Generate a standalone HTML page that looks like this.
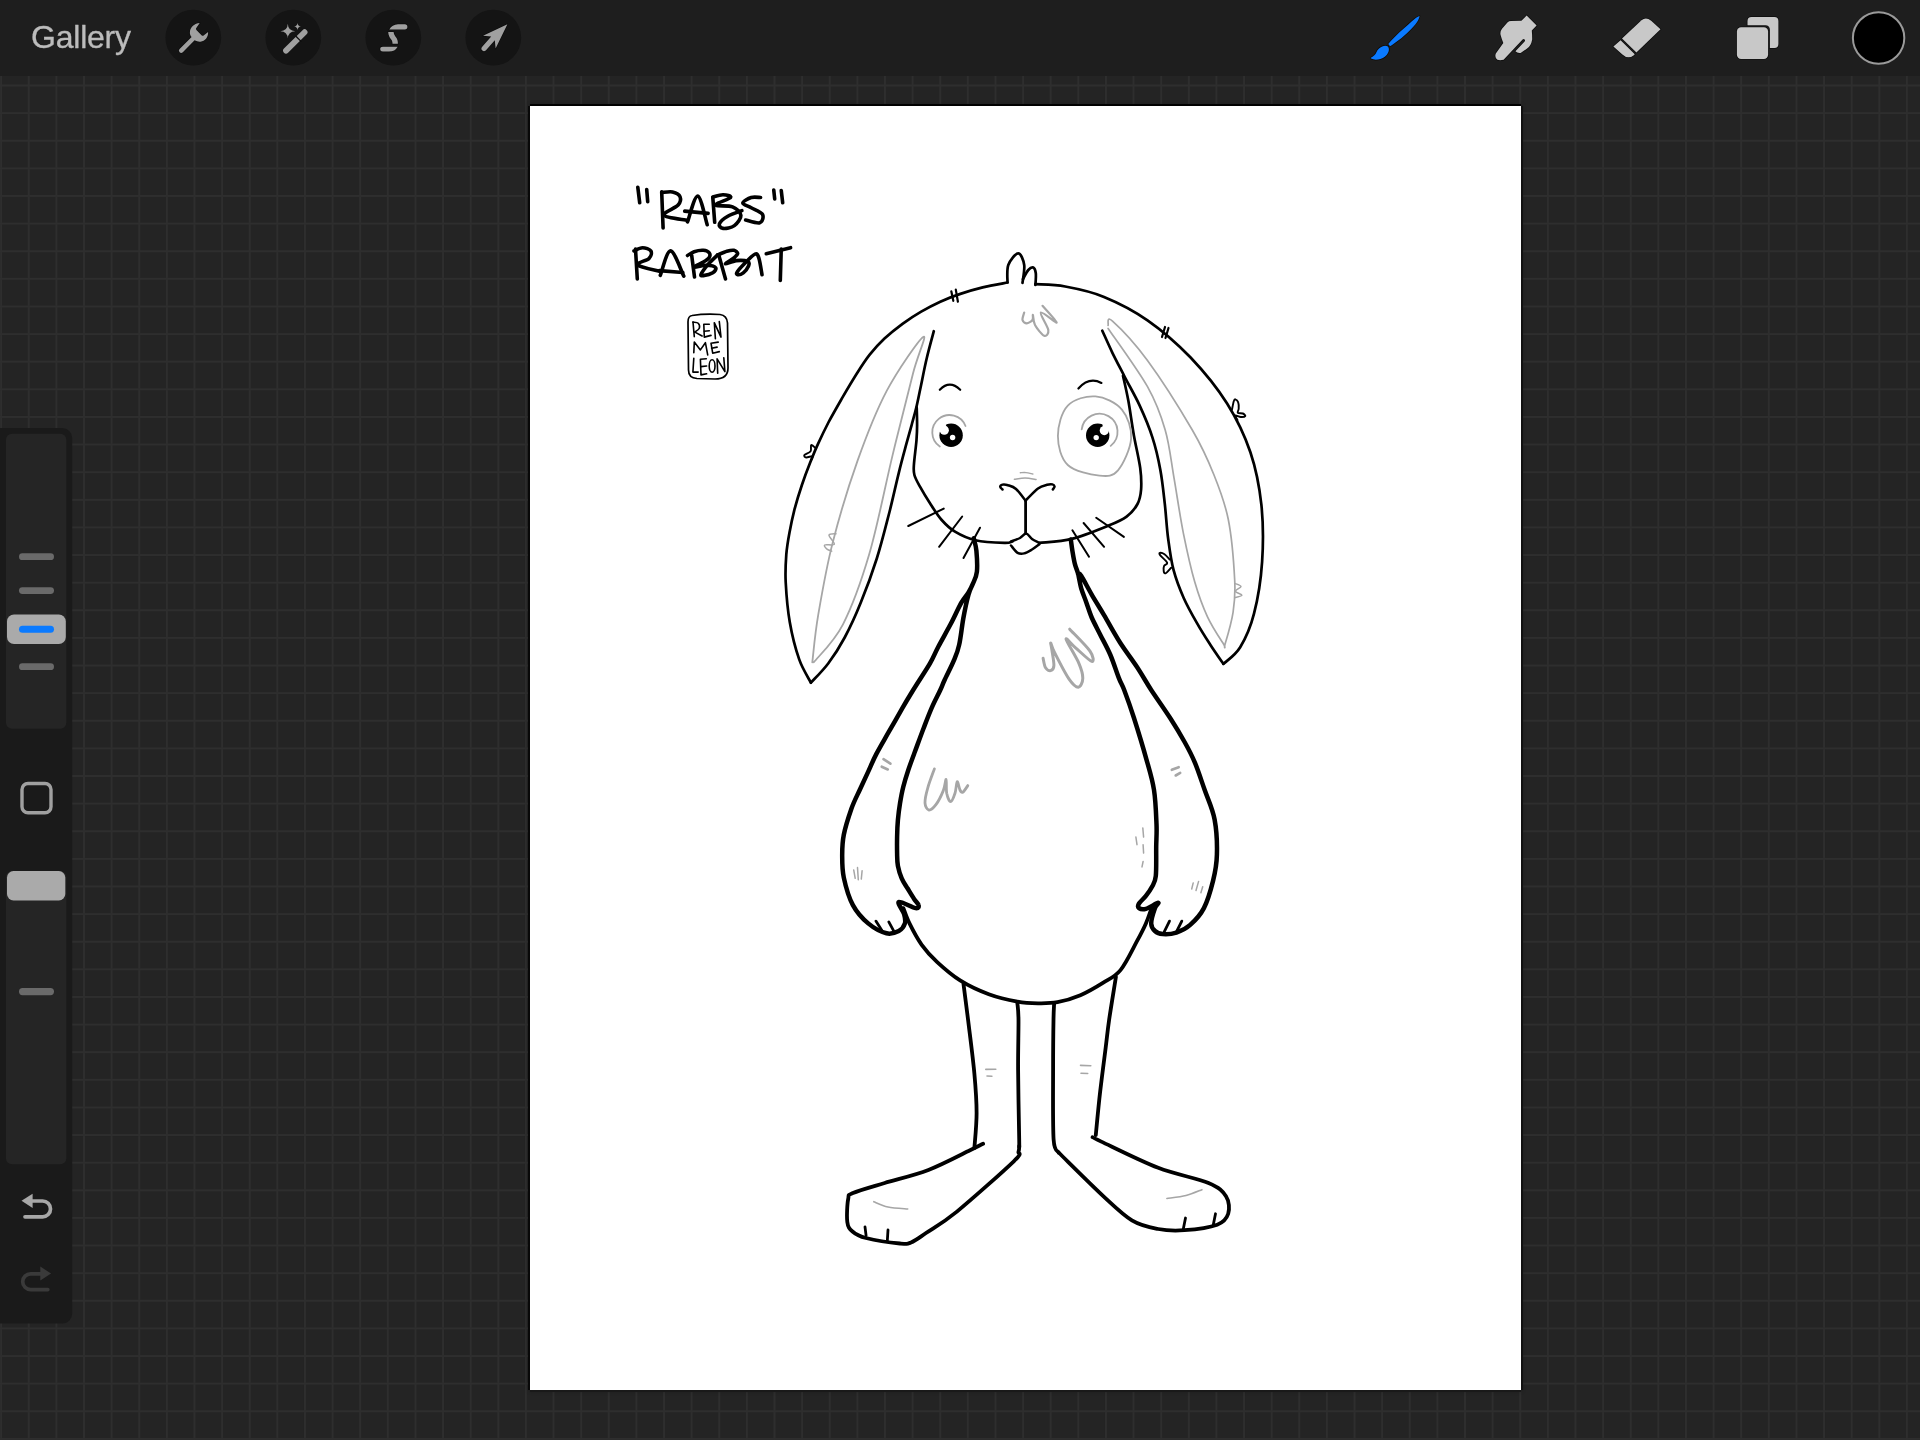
<!DOCTYPE html>
<html><head><meta charset="utf-8">
<style>
html,body{margin:0;padding:0;width:1920px;height:1440px;overflow:hidden;background:#242424;}
body{position:relative;font-family:"Liberation Sans",sans-serif;}
.abs{position:absolute;}
#grid{position:absolute;left:0;top:0;}
#topbar{position:absolute;left:0;top:0;width:1920px;height:76px;background:#1e1e1e;}
#gallery{position:absolute;left:31.2px;top:16.6px;font-size:32px;letter-spacing:-0.22px;color:#bcbcbc;-webkit-text-stroke:0.35px #bcbcbc;will-change:transform;line-height:40px;}
#canvas{position:absolute;left:530px;top:106px;width:991px;height:1284px;background:#fff;box-shadow:0 -2px 0 #000, -2px 0 0 #080808, 2px 0 0 #111, 0 2px 0 #191919, 0 0 4px 1px rgba(0,0,0,0.3);}
#draw{position:absolute;left:0;top:0;}
</style></head><body>
<svg id="grid" width="1920" height="1440" fill="#2e2e2e"><rect x="0.14" y="76" width="2" height="1364"/>
<rect x="27.76" y="76" width="2" height="1364"/>
<rect x="55.38" y="76" width="2" height="1364"/>
<rect x="83.00" y="76" width="2" height="1364"/>
<rect x="110.62" y="76" width="2" height="1364"/>
<rect x="138.24" y="76" width="2" height="1364"/>
<rect x="165.86" y="76" width="2" height="1364"/>
<rect x="193.48" y="76" width="2" height="1364"/>
<rect x="221.10" y="76" width="2" height="1364"/>
<rect x="248.72" y="76" width="2" height="1364"/>
<rect x="276.34" y="76" width="2" height="1364"/>
<rect x="303.96" y="76" width="2" height="1364"/>
<rect x="331.58" y="76" width="2" height="1364"/>
<rect x="359.20" y="76" width="2" height="1364"/>
<rect x="386.82" y="76" width="2" height="1364"/>
<rect x="414.44" y="76" width="2" height="1364"/>
<rect x="442.06" y="76" width="2" height="1364"/>
<rect x="469.68" y="76" width="2" height="1364"/>
<rect x="497.30" y="76" width="2" height="1364"/>
<rect x="524.92" y="76" width="2" height="1364"/>
<rect x="552.54" y="76" width="2" height="1364"/>
<rect x="580.16" y="76" width="2" height="1364"/>
<rect x="607.78" y="76" width="2" height="1364"/>
<rect x="635.40" y="76" width="2" height="1364"/>
<rect x="663.02" y="76" width="2" height="1364"/>
<rect x="690.64" y="76" width="2" height="1364"/>
<rect x="718.26" y="76" width="2" height="1364"/>
<rect x="745.88" y="76" width="2" height="1364"/>
<rect x="773.50" y="76" width="2" height="1364"/>
<rect x="801.12" y="76" width="2" height="1364"/>
<rect x="828.74" y="76" width="2" height="1364"/>
<rect x="856.36" y="76" width="2" height="1364"/>
<rect x="883.98" y="76" width="2" height="1364"/>
<rect x="911.60" y="76" width="2" height="1364"/>
<rect x="939.22" y="76" width="2" height="1364"/>
<rect x="966.84" y="76" width="2" height="1364"/>
<rect x="994.46" y="76" width="2" height="1364"/>
<rect x="1022.08" y="76" width="2" height="1364"/>
<rect x="1049.70" y="76" width="2" height="1364"/>
<rect x="1077.32" y="76" width="2" height="1364"/>
<rect x="1104.94" y="76" width="2" height="1364"/>
<rect x="1132.56" y="76" width="2" height="1364"/>
<rect x="1160.18" y="76" width="2" height="1364"/>
<rect x="1187.80" y="76" width="2" height="1364"/>
<rect x="1215.42" y="76" width="2" height="1364"/>
<rect x="1243.04" y="76" width="2" height="1364"/>
<rect x="1270.66" y="76" width="2" height="1364"/>
<rect x="1298.28" y="76" width="2" height="1364"/>
<rect x="1325.90" y="76" width="2" height="1364"/>
<rect x="1353.52" y="76" width="2" height="1364"/>
<rect x="1381.14" y="76" width="2" height="1364"/>
<rect x="1408.76" y="76" width="2" height="1364"/>
<rect x="1436.38" y="76" width="2" height="1364"/>
<rect x="1464.00" y="76" width="2" height="1364"/>
<rect x="1491.62" y="76" width="2" height="1364"/>
<rect x="1519.24" y="76" width="2" height="1364"/>
<rect x="1546.86" y="76" width="2" height="1364"/>
<rect x="1574.48" y="76" width="2" height="1364"/>
<rect x="1602.10" y="76" width="2" height="1364"/>
<rect x="1629.72" y="76" width="2" height="1364"/>
<rect x="1657.34" y="76" width="2" height="1364"/>
<rect x="1684.96" y="76" width="2" height="1364"/>
<rect x="1712.58" y="76" width="2" height="1364"/>
<rect x="1740.20" y="76" width="2" height="1364"/>
<rect x="1767.82" y="76" width="2" height="1364"/>
<rect x="1795.44" y="76" width="2" height="1364"/>
<rect x="1823.06" y="76" width="2" height="1364"/>
<rect x="1850.68" y="76" width="2" height="1364"/>
<rect x="1878.30" y="76" width="2" height="1364"/>
<rect x="1905.92" y="76" width="2" height="1364"/>
<rect x="0" y="84.50" width="1920" height="2"/>
<rect x="0" y="112.12" width="1920" height="2"/>
<rect x="0" y="139.74" width="1920" height="2"/>
<rect x="0" y="167.36" width="1920" height="2"/>
<rect x="0" y="194.98" width="1920" height="2"/>
<rect x="0" y="222.60" width="1920" height="2"/>
<rect x="0" y="250.22" width="1920" height="2"/>
<rect x="0" y="277.84" width="1920" height="2"/>
<rect x="0" y="305.46" width="1920" height="2"/>
<rect x="0" y="333.08" width="1920" height="2"/>
<rect x="0" y="360.70" width="1920" height="2"/>
<rect x="0" y="388.32" width="1920" height="2"/>
<rect x="0" y="415.94" width="1920" height="2"/>
<rect x="0" y="443.56" width="1920" height="2"/>
<rect x="0" y="471.18" width="1920" height="2"/>
<rect x="0" y="498.80" width="1920" height="2"/>
<rect x="0" y="526.42" width="1920" height="2"/>
<rect x="0" y="554.04" width="1920" height="2"/>
<rect x="0" y="581.66" width="1920" height="2"/>
<rect x="0" y="609.28" width="1920" height="2"/>
<rect x="0" y="636.90" width="1920" height="2"/>
<rect x="0" y="664.52" width="1920" height="2"/>
<rect x="0" y="692.14" width="1920" height="2"/>
<rect x="0" y="719.76" width="1920" height="2"/>
<rect x="0" y="747.38" width="1920" height="2"/>
<rect x="0" y="775.00" width="1920" height="2"/>
<rect x="0" y="802.62" width="1920" height="2"/>
<rect x="0" y="830.24" width="1920" height="2"/>
<rect x="0" y="857.86" width="1920" height="2"/>
<rect x="0" y="885.48" width="1920" height="2"/>
<rect x="0" y="913.10" width="1920" height="2"/>
<rect x="0" y="940.72" width="1920" height="2"/>
<rect x="0" y="968.34" width="1920" height="2"/>
<rect x="0" y="995.96" width="1920" height="2"/>
<rect x="0" y="1023.58" width="1920" height="2"/>
<rect x="0" y="1051.20" width="1920" height="2"/>
<rect x="0" y="1078.82" width="1920" height="2"/>
<rect x="0" y="1106.44" width="1920" height="2"/>
<rect x="0" y="1134.06" width="1920" height="2"/>
<rect x="0" y="1161.68" width="1920" height="2"/>
<rect x="0" y="1189.30" width="1920" height="2"/>
<rect x="0" y="1216.92" width="1920" height="2"/>
<rect x="0" y="1244.54" width="1920" height="2"/>
<rect x="0" y="1272.16" width="1920" height="2"/>
<rect x="0" y="1299.78" width="1920" height="2"/>
<rect x="0" y="1327.40" width="1920" height="2"/>
<rect x="0" y="1355.02" width="1920" height="2"/>
<rect x="0" y="1382.64" width="1920" height="2"/>
<rect x="0" y="1410.26" width="1920" height="2"/>
<rect x="0" y="1437.88" width="1920" height="2"/></svg>
<div id="canvas"></div>
<svg id="draw" width="1920" height="1440" viewBox="0 0 1920 1440" fill="none" stroke="#000" stroke-linecap="round" stroke-linejoin="round">
<path d="M810.9,682.7C809.0,678.8 802.7,669.4 799.2,659.4C795.7,649.3 792.0,635.0 789.8,622.2C787.5,609.4 786.3,593.6 785.7,582.3C785.1,571.0 785.7,562.7 786.3,554.4C787.0,546.1 788.1,540.0 789.5,532.5C790.9,525.0 792.5,517.3 794.5,509.4C796.6,501.5 799.3,492.7 801.9,485.0C804.5,477.3 807.3,469.9 810.0,463.1C812.7,456.4 814.7,451.1 817.8,444.4C820.9,437.6 824.3,430.4 828.4,422.5C832.6,414.6 838.1,405.1 842.8,396.9C847.6,388.7 852.6,380.3 857.0,373.3C861.5,366.2 865.1,360.5 869.7,354.7C874.3,348.9 879.1,343.7 884.5,338.6C890.0,333.5 896.4,328.4 902.5,323.9C908.6,319.4 914.9,315.2 921.2,311.6C927.6,307.9 933.8,304.7 940.3,301.7C946.8,298.8 953.4,296.2 960.4,293.9C967.5,291.5 974.9,289.3 982.7,287.4C990.6,285.5 1003.4,283.3 1007.5,282.5" stroke="#000" stroke-width="2.7" fill="none"/>
<path d="M1007.5,282.5C1007.6,279.6 1006.5,269.9 1008.3,265.0C1010.1,260.1 1015.6,253.3 1018.3,253.3C1020.9,253.3 1023.5,260.1 1024.2,265.0C1024.9,269.9 1022.8,279.9 1022.5,282.9" stroke="#000" stroke-width="2.7" fill="none"/>
<path d="M1022.9,279.2C1023.8,277.7 1026.6,271.9 1028.3,270.0C1030.0,268.1 1032.0,266.9 1033.3,267.5C1034.5,268.1 1035.4,270.4 1035.8,273.3C1036.2,276.2 1035.5,283.1 1035.4,285.0" stroke="#000" stroke-width="2.7" fill="none"/>
<path d="M1035.4,284.2C1040.4,284.6 1053.8,284.4 1065.2,286.5C1076.6,288.6 1090.3,291.2 1104.0,296.9C1117.7,302.5 1133.1,310.2 1147.5,320.3C1162.0,330.4 1177.3,343.7 1190.6,357.5C1203.8,371.4 1217.1,387.7 1227.1,403.5C1237.0,419.3 1244.7,435.4 1250.4,452.3C1256.1,469.2 1259.4,486.6 1261.4,504.9C1263.3,523.1 1263.3,543.7 1262.1,561.8C1260.9,579.9 1257.7,599.4 1254.0,613.6C1250.4,627.9 1245.3,638.8 1240.2,647.2C1235.1,655.6 1226.2,661.1 1223.4,663.9" stroke="#000" stroke-width="2.7" fill="none"/>
<path d="M951.3,291.3L953.3,300.8" stroke="#000" stroke-width="2.2"/>
<path d="M955.8,289.6L957.9,301.7" stroke="#000" stroke-width="2.2"/>
<path d="M1162,337L1165,327" stroke="#000" stroke-width="2.2"/>
<path d="M1165.5,338L1168.5,328" stroke="#000" stroke-width="2.2"/>
<path d="M810.9,682.7C813.8,679.5 822.6,671.0 828.2,663.5C833.9,655.9 839.3,647.6 844.7,637.5C850.1,627.4 855.4,616.0 860.7,602.8C866.1,589.6 872.0,573.7 876.8,558.5C881.6,543.3 885.9,525.8 889.6,511.5C893.2,497.2 896.0,484.0 898.8,472.8C901.5,461.6 904.1,452.3 906.3,444.2C908.5,436.1 910.2,430.1 911.9,424.0C913.6,417.9 914.8,413.8 916.3,407.5C917.8,401.2 919.1,394.3 920.9,386.0C922.6,377.8 924.6,367.1 926.8,358.0C928.9,348.9 932.6,335.7 933.8,331.2" stroke="#000" stroke-width="2.7" fill="none"/>
<path d="M916.7,407.5C916.8,410.4 917.1,419.6 917.1,425.0C917.1,430.4 917.0,433.3 916.5,440.0C916.0,446.7 914.2,459.2 913.9,465.0C913.5,470.8 913.4,471.4 914.4,475.0C915.4,478.6 917.4,482.0 920.0,486.7C922.6,491.4 926.4,497.8 930.0,503.3C933.6,508.9 937.5,515.3 941.7,520.0C945.9,524.7 949.4,528.3 955.0,531.7C960.6,535.1 967.1,538.3 975.4,540.2C983.6,542.1 998.3,542.7 1004.5,542.9C1010.7,543.1 1011.1,541.7 1012.4,541.5" stroke="#000" stroke-width="2.7" fill="none"/>
<path d="M1223.4,663.9C1221.2,660.7 1214.7,651.5 1210.3,644.7C1205.9,637.9 1201.4,631.0 1197.0,623.1C1192.5,615.3 1187.5,606.6 1183.6,597.7C1179.7,588.9 1176.2,580.0 1173.6,570.2C1171.0,560.4 1169.7,550.1 1168.2,539.0C1166.7,528.0 1166.1,515.4 1164.8,503.9C1163.5,492.4 1162.4,480.9 1160.3,469.8C1158.3,458.7 1155.9,448.0 1152.4,437.3C1149.0,426.6 1144.3,415.6 1139.7,405.6C1135.1,395.6 1129.4,386.0 1124.8,377.1C1120.3,368.3 1116.2,360.5 1112.4,352.8C1108.7,345.0 1104.0,334.4 1102.3,330.7" stroke="#000" stroke-width="2.7" fill="none"/>
<path d="M1123.0,375.8C1123.9,380.0 1126.6,391.2 1128.4,401.1C1130.2,411.0 1131.9,424.3 1133.9,435.4C1135.9,446.5 1139.0,458.9 1140.2,467.9C1141.4,476.9 1141.5,483.5 1141.1,489.5C1140.6,495.5 1139.9,499.5 1137.5,504.0C1135.1,508.5 1131.4,513.0 1126.6,516.6C1121.8,520.2 1117.7,521.9 1108.6,525.6C1099.5,529.3 1083.3,536.0 1071.8,538.9C1060.3,541.8 1044.8,542.2 1039.4,542.9" stroke="#000" stroke-width="2.7" fill="none"/>
<path d="M816.2,448.8C815.4,448.1 812.2,444.6 811.2,445.0C810.3,445.4 811.7,449.6 810.6,451.2C809.5,452.9 805.1,454.0 804.4,455.0C803.7,456.0 804.9,457.3 806.2,457.5C807.6,457.7 811.7,455.8 812.5,456.2C813.3,456.7 811.5,459.4 811.2,460.0" stroke="#000" stroke-width="1.9" fill="none"/>
<path d="M1232.0,409.5C1232.3,408.1 1233.2,403.1 1233.7,401.4C1234.2,399.7 1234.5,399.1 1235.3,399.3C1236.1,399.5 1237.7,400.8 1238.2,402.4C1238.8,404.0 1238.8,407.0 1238.7,408.7C1238.6,410.4 1237.1,412.0 1237.8,412.8C1238.5,413.6 1241.5,413.0 1242.8,413.5C1244.0,414.0 1245.6,415.4 1245.3,416.0C1245.0,416.6 1242.4,417.1 1240.8,417.0C1239.1,416.9 1235.8,415.0 1235.3,415.5C1234.8,416.0 1237.1,419.2 1237.5,420.0" stroke="#000" stroke-width="1.9" fill="none"/>
<path d="M1169.7,559.5C1168.8,558.6 1166.1,555.4 1164.5,554.3C1162.9,553.2 1160.6,552.7 1159.9,552.9C1159.2,553.1 1159.1,553.8 1160.3,555.4C1161.5,557.0 1166.6,561.0 1167.2,562.7C1167.8,564.4 1164.7,564.4 1164.1,565.8C1163.5,567.2 1163.5,569.8 1163.7,571.0C1163.9,572.2 1164.2,573.8 1165.5,573.3C1166.8,572.8 1170.2,568.6 1171.2,567.7" stroke="#000" stroke-width="1.9" fill="none"/>
<path d="M812.3,662.3C813.3,654.5 814.7,635.5 818.1,615.6C821.5,595.7 826.1,568.4 832.7,542.6C839.3,516.8 848.5,486.2 857.5,460.9C866.5,435.6 875.8,411.6 886.7,390.9C897.7,370.2 918.8,339.8 923.2,336.9C927.6,334.0 918.1,353.7 913.0,373.4C907.9,393.1 899.9,425.0 892.6,455.1C885.3,485.2 877.5,526.1 869.2,554.3C860.9,582.5 852.2,606.3 843.0,624.3C833.8,642.3 818.7,656.0 813.8,662.3" stroke="#a6a6a6" stroke-width="1.8" fill="none"/>
<path d="M1108.1,325.4C1108.8,324.7 1105.9,315.2 1112.5,321.1C1119.1,327.0 1134.2,342.4 1147.5,360.5C1160.8,378.6 1181.2,411.0 1192.3,430.0C1203.4,449.0 1207.9,459.8 1213.9,474.7C1219.9,489.6 1224.8,501.9 1228.3,519.5C1231.8,537.1 1233.9,564.8 1234.7,580.2C1235.5,595.6 1234.7,601.5 1233.1,612.1C1231.5,622.7 1226.7,638.7 1225.1,644.0C1223.5,649.3 1226.4,648.5 1223.5,644.0C1220.6,639.5 1212.3,627.3 1207.5,616.9C1202.7,606.5 1198.7,595.6 1194.7,581.8C1190.7,567.9 1187.0,551.1 1183.5,533.8C1180.0,516.5 1177.0,495.2 1174.0,477.9C1171.0,460.6 1169.6,445.2 1165.2,430.0C1160.8,414.8 1157.0,403.6 1147.5,386.7C1138.0,369.8 1114.7,338.1 1108.1,328.4" stroke="#a6a6a6" stroke-width="1.7" fill="none"/>
<path d="M836.0,533.8C834.8,534.0 829.3,533.4 829.0,535.1C828.7,536.8 835.0,542.6 834.3,544.2C833.6,545.9 825.9,544.1 824.7,545.0C823.5,545.9 826.1,548.4 827.3,549.4C828.5,550.4 831.0,550.8 831.7,551.1" stroke="#a6a6a6" stroke-width="1.5" fill="none"/>
<path d="M1234.7,583.4C1235.8,583.9 1240.9,585.2 1241.0,586.5C1241.1,587.8 1235.3,589.8 1235.5,591.3C1235.7,592.8 1242.0,594.2 1241.9,595.3C1241.8,596.4 1235.9,597.3 1234.7,597.7" stroke="#a6a6a6" stroke-width="1.5" fill="none"/>
<circle cx="951.1" cy="435.2" r="11.7" fill="#000" stroke="none"/>
<circle cx="944.3" cy="430.2" r="4.6" fill="#fff" stroke="none"/>
<path d="M946.4,424.2 L944.3,430.2 L939.6,430.2 L938.9,424.2Z" fill="#fff" stroke="none"/>
<circle cx="952.6" cy="437.5" r="2.7" fill="#fff" stroke="none"/>
<circle cx="1097.7" cy="435.3" r="11.7" fill="#000" stroke="none"/>
<circle cx="1104.3" cy="430.6" r="4.6" fill="#fff" stroke="none"/>
<path d="M1102.2,424.3 L1104.3,430.6 L1108.9,430.2 L1109.5,424.4Z" fill="#fff" stroke="none"/>
<circle cx="1096.2" cy="437.6" r="2.7" fill="#fff" stroke="none"/>
<path d="M939.8,446.5 A17.2,17.2 0 1 1 965.5,426" stroke="#a6a6a6" stroke-width="1.8"/>
<path d="M1081.7,429.4 A18,18 0 1 1 1110.7,445.9" stroke="#a6a6a6" stroke-width="1.8"/>
<path d="M1095.5,396.4C1104.5,397.1 1116.0,402.6 1121.9,409.6C1127.8,416.6 1131.8,428.5 1131.1,438.6C1130.4,448.7 1123.3,464.1 1118.0,470.3C1112.7,476.5 1107.9,476.5 1099.5,475.6C1091.1,474.7 1074.7,471.6 1067.8,465.0C1060.9,458.4 1057.9,445.9 1057.9,436.0C1057.9,426.1 1061.5,412.2 1067.8,405.6C1074.1,399.0 1086.5,395.7 1095.5,396.4Z" stroke="#a6a6a6" stroke-width="1.8" fill="none"/>
<path d="M939.8,389.8 Q949.7,379.5 960.2,389.8" stroke="#000" stroke-width="2.2"/>
<path d="M1078.4,388.5 Q1089,376.5 1101.4,382.9" stroke="#000" stroke-width="2.2"/>
<path d="M1002.5,489.5C1002.1,489.1 1000.2,487.6 1000.2,486.8C1000.2,486.0 1001.2,484.9 1002.5,484.6C1003.8,484.3 1005.8,484.5 1008.0,485.2C1010.2,485.9 1013.1,486.4 1016.0,489.0C1018.9,491.6 1024.0,498.7 1025.6,500.6" stroke="#000" stroke-width="2.5" fill="none"/>
<path d="M1052.8,489.5C1053.1,489.0 1054.6,487.5 1054.6,486.6C1054.5,485.8 1053.8,484.7 1052.5,484.4C1051.2,484.1 1049.4,484.1 1047.0,484.8C1044.6,485.5 1041.6,485.9 1038.0,488.5C1034.4,491.1 1027.7,498.6 1025.6,500.6" stroke="#000" stroke-width="2.5" fill="none"/>
<path d="M1025.6,500.6L1025.6,533.6" stroke="#000" stroke-width="2.8"/>
<path d="M1011.0,541.5C1012.5,540.9 1017.5,539.3 1020.0,538.0C1022.5,536.7 1024.2,533.4 1026.2,533.6C1028.2,533.8 1029.8,537.5 1032.0,539.0C1034.2,540.5 1038.2,542.2 1039.4,542.9" stroke="#000" stroke-width="2.5" fill="none"/>
<path d="M1011.0,545.5C1012.1,546.7 1015.4,551.5 1017.6,552.8C1019.8,554.1 1021.8,553.9 1024.2,553.4C1026.6,552.9 1029.5,551.0 1032.0,549.5C1034.5,548.0 1038.2,545.1 1039.4,544.2" stroke="#000" stroke-width="2.5" fill="none"/>
<path d="M1020.3,472.7C1021.2,472.7 1023.9,472.4 1026.0,472.6C1028.1,472.8 1031.7,473.8 1032.8,474.0" stroke="#a6a6a6" stroke-width="1.4" fill="none"/>
<path d="M1014.4,479.3C1016.2,479.1 1021.4,478.0 1025.0,478.0C1028.6,478.0 1034.2,479.2 1036.1,479.5" stroke="#a6a6a6" stroke-width="1.4" fill="none"/>
<path d="M908.3,526L943.75,508.6" stroke="#000" stroke-width="2"/>
<path d="M939.1,546.8L962.2,516.5" stroke="#000" stroke-width="2"/>
<path d="M963.5,558L980,527.7" stroke="#000" stroke-width="2"/>
<path d="M1072.4,530.3L1089,556.7" stroke="#000" stroke-width="2"/>
<path d="M1083.6,523L1104.1,546.8" stroke="#000" stroke-width="2"/>
<path d="M1096.2,517.8L1123.9,536.9" stroke="#000" stroke-width="2"/>
<path d="M1024.2,312.5C1023.9,313.8 1022.1,318.2 1022.5,320.0C1022.9,321.8 1025.0,323.3 1026.7,323.3C1028.4,323.3 1031.5,321.4 1032.5,320.0C1033.5,318.6 1032.5,314.2 1032.9,315.0C1033.3,315.8 1033.1,321.5 1035.0,325.0C1036.9,328.5 1042.0,335.0 1044.2,335.8C1046.4,336.6 1048.9,333.9 1048.3,330.0C1047.7,326.1 1039.4,313.8 1040.8,312.5C1042.2,311.2 1056.4,323.6 1056.7,322.5C1057.0,321.4 1044.9,308.6 1042.5,305.8" stroke="#a6a6a6" stroke-width="2.2" fill="none"/>
<path d="M973.8,538.3C974.2,540.4 975.9,545.2 976.4,550.8C976.9,556.4 977.5,566.1 976.9,571.7C976.3,577.3 974.1,580.7 972.7,584.2C971.3,587.7 970.4,589.4 968.5,592.5C966.6,595.6 964.2,597.7 961.2,602.9C958.3,608.1 954.6,616.5 950.8,623.8C947.0,631.0 941.8,640.1 938.3,646.7C934.8,653.3 934.2,656.1 930.0,663.3C925.8,670.5 917.7,682.6 913.2,690.0C908.7,697.4 906.8,700.4 902.8,707.4C898.8,714.4 893.3,724.0 888.9,731.7C884.5,739.5 879.9,747.2 876.4,753.9C872.9,760.6 870.9,765.9 868.1,771.9C865.3,777.9 862.5,783.9 859.7,790.0C856.9,796.1 854.0,801.3 851.4,808.8C848.8,816.3 845.3,827.2 843.8,834.8C842.3,842.4 842.2,847.5 842.2,854.6C842.2,861.7 842.0,869.2 843.8,877.6C845.6,886.0 848.8,897.5 852.9,905.1C857.0,912.7 862.6,918.7 868.2,923.4C873.8,928.1 881.4,932.0 886.5,933.3C891.6,934.6 895.7,932.6 898.8,931.0C901.9,929.4 904.0,926.2 904.9,923.4C905.8,920.6 905.1,917.8 904.1,914.2C903.1,910.6 896.9,903.0 898.8,902.0C900.7,901.0 912.3,907.6 915.6,908.1C918.9,908.6 918.9,906.6 918.6,905.1C918.4,903.6 916.0,901.7 914.1,898.9C912.2,896.1 909.6,891.7 907.5,888.3C905.4,884.9 903.3,882.0 901.7,878.3C900.1,874.5 898.7,870.0 897.9,865.8C897.1,861.6 897.2,858.1 897.1,853.3C897.0,848.4 897.0,842.2 897.1,836.7C897.2,831.2 897.4,825.6 897.9,820.0C898.4,814.4 899.1,808.8 900.0,803.3C900.9,797.8 901.9,792.2 903.3,786.7C904.7,781.2 906.4,775.7 908.3,770.0C910.2,764.3 912.0,759.5 914.6,752.5C917.2,745.5 920.7,735.7 923.6,728.2C926.5,720.7 929.1,713.8 931.9,707.4C934.7,701.0 938.2,694.6 940.3,690.0C942.4,685.4 942.3,685.0 944.6,680.0C946.9,675.0 951.6,666.1 954.0,660.2C956.4,654.3 957.7,651.6 959.2,644.6C960.8,637.6 961.8,626.8 963.3,618.5C964.8,610.2 966.9,600.3 968.5,594.6C970.1,588.9 972.0,585.9 972.7,584.2" stroke="#000" stroke-width="4.5" fill="none"/>
<path d="M1070.8,539.4C1071.1,541.3 1071.7,546.6 1072.4,550.8C1073.1,555.0 1074.0,560.6 1075.0,564.4C1076.0,568.2 1077.1,569.8 1078.1,573.8C1079.1,577.7 1079.8,583.4 1081.2,588.3C1082.7,593.2 1084.8,598.0 1086.5,602.9C1088.2,607.8 1089.5,612.3 1091.7,617.5C1094.0,622.7 1096.9,628.0 1100.0,634.2C1103.1,640.5 1107.3,647.7 1110.4,655.0C1113.5,662.3 1116.5,672.1 1118.8,677.9C1121.0,683.7 1121.7,683.4 1124.2,690.0C1126.7,696.6 1130.2,706.2 1133.9,717.8C1137.6,729.4 1143.1,747.4 1146.4,759.4C1149.8,771.4 1152.3,779.2 1154.0,790.0C1155.7,800.8 1156.1,814.6 1156.5,824.1C1156.9,833.6 1156.3,838.4 1156.2,847.0C1156.1,855.6 1156.5,869.4 1155.8,876.0C1155.1,882.6 1153.7,883.4 1152.0,886.7C1150.3,890.0 1148.1,893.1 1145.9,895.9C1143.7,898.7 1140.2,901.5 1139.0,903.5C1137.8,905.5 1137.8,907.2 1139.0,908.1C1140.2,909.0 1142.7,909.8 1145.9,908.9C1149.1,908.0 1156.6,902.9 1158.1,902.8C1159.6,902.7 1156.2,904.7 1155.0,908.1C1153.8,911.5 1151.2,919.6 1151.2,923.4C1151.2,927.2 1153.1,929.2 1155.0,931.0C1156.9,932.8 1159.1,933.8 1162.7,934.1C1166.3,934.4 1171.8,934.1 1176.4,932.6C1181.0,931.1 1185.6,929.0 1190.2,924.9C1194.8,920.8 1200.1,915.5 1203.9,908.1C1207.7,900.7 1210.9,889.5 1213.1,880.6C1215.3,871.7 1216.7,864.8 1216.9,854.6C1217.2,844.4 1216.6,830.3 1214.6,819.5C1212.6,808.7 1208.0,799.4 1204.7,790.0C1201.4,780.6 1198.3,770.9 1195.0,762.9C1191.7,754.9 1188.8,749.5 1184.6,742.0C1180.4,734.5 1175.6,726.5 1170.0,717.8C1164.4,709.1 1156.8,698.5 1151.2,690.0C1145.8,681.5 1142.2,674.9 1137.0,667.0C1131.8,659.1 1125.5,651.1 1120.0,642.5C1114.5,633.9 1108.9,623.4 1104.2,615.4C1099.5,607.4 1095.5,601.2 1091.7,594.6C1087.9,588.0 1083.5,579.3 1081.2,575.8C1079.0,572.3 1078.6,574.1 1078.1,573.8" stroke="#000" stroke-width="4.5" fill="none"/>
<path d="M903.4,908.1C904.4,910.6 906.5,917.3 909.5,923.4C912.5,929.5 917.1,938.3 921.7,944.8C926.3,951.2 930.8,956.2 937.2,962.1C943.6,968.0 951.5,975.0 960.1,980.4C968.7,985.8 979.2,990.7 988.8,994.2C998.3,997.7 1009.2,1000.1 1017.4,1001.6C1025.6,1003.1 1031.3,1003.2 1038.0,1003.3C1044.7,1003.4 1050.4,1003.5 1057.5,1002.2C1064.6,1000.9 1072.8,998.5 1080.4,995.3C1088.0,992.0 1096.6,986.9 1103.3,982.7C1110.0,978.5 1114.9,976.9 1120.5,970.1C1126.1,963.3 1132.5,949.5 1136.7,941.7C1140.9,933.9 1143.4,929.2 1145.9,923.4C1148.5,917.5 1151.0,909.4 1152.0,906.6" stroke="#000" stroke-width="3.8" fill="none"/>
<path d="M875.9,921.1L882.7,931.8" stroke="#000" stroke-width="2.8"/>
<path d="M888.8,921.9L894.2,931.8" stroke="#000" stroke-width="2.8"/>
<path d="M1169.5,921.1L1164.2,931.8" stroke="#000" stroke-width="2.8"/>
<path d="M1181.8,921.1L1176.4,931.8" stroke="#000" stroke-width="2.8"/>
<path d="M1043.1,658.3C1043.5,659.9 1044.3,665.8 1045.6,667.8C1046.8,669.8 1049.2,671.0 1050.6,670.6C1052.0,670.2 1053.7,669.2 1053.9,665.6C1054.1,662.0 1052.2,652.6 1051.7,648.9C1051.2,645.1 1050.3,642.5 1050.8,643.1C1051.2,643.7 1051.4,646.2 1054.4,652.2C1057.4,658.2 1064.9,673.1 1068.9,678.9C1072.9,684.7 1076.0,687.3 1078.3,687.2C1080.6,687.1 1082.7,682.3 1082.8,678.3C1082.9,674.3 1081.7,669.8 1078.9,663.3C1076.1,656.8 1066.6,641.8 1066.1,639.2C1065.5,636.6 1071.3,644.1 1075.6,647.8C1079.9,651.5 1089.3,660.8 1091.7,661.4C1094.1,662.0 1093.7,656.5 1090.0,651.1C1086.3,645.7 1073.1,632.9 1069.7,629.2" stroke="#a6a6a6" stroke-width="3.0" fill="none"/>
<path d="M934.4,768.9C933.3,772.0 929.4,782.1 927.8,787.8C926.2,793.4 924.8,799.1 925.0,802.8C925.2,806.5 927.0,809.7 928.9,810.0C930.8,810.3 933.7,807.6 936.1,804.4C938.5,801.2 941.6,794.8 943.3,790.6C945.0,786.4 945.5,779.0 946.1,779.4C946.7,779.8 946.0,789.6 946.7,793.3C947.5,797.0 949.2,801.7 950.6,801.7C952.0,801.7 953.9,796.6 955.0,793.3C956.1,790.0 956.4,782.2 957.2,781.7C958.0,781.2 959.1,788.2 960.0,790.0C960.9,791.8 961.5,792.9 962.8,792.2C964.1,791.5 967.0,786.7 967.8,785.6" stroke="#a6a6a6" stroke-width="2.8" fill="none"/>
<path d="M883.5,759.1L890.4,763.7" stroke="#a6a6a6" stroke-width="2.6"/>
<path d="M881.7,766.7L887.8,769.5" stroke="#a6a6a6" stroke-width="2.6"/>
<path d="M1171.8,769.8L1178.7,767.2" stroke="#a6a6a6" stroke-width="2.6"/>
<path d="M1175.7,775.5L1180.2,772.9" stroke="#a6a6a6" stroke-width="2.6"/>
<path d="M853.7,869.9L855.2,878.3" stroke="#a6a6a6" stroke-width="1.5"/>
<path d="M857.5,867.6L858.3,879.8" stroke="#a6a6a6" stroke-width="1.5"/>
<path d="M862.1,870.7L861.3,879.1" stroke="#a6a6a6" stroke-width="1.5"/>
<path d="M1193.2,882.9L1191.7,889" stroke="#a6a6a6" stroke-width="1.5"/>
<path d="M1198.6,881.4L1196,890.5" stroke="#a6a6a6" stroke-width="1.5"/>
<path d="M1202.7,886.7L1200.9,892.8" stroke="#a6a6a6" stroke-width="1.5"/>
<path d="M1142.8,827.9L1143.6,837.1" stroke="#a6a6a6" stroke-width="1.5"/>
<path d="M1135.9,837.1L1137,844.7" stroke="#a6a6a6" stroke-width="1.5"/>
<path d="M1143.1,844.7L1143.6,853.1" stroke="#a6a6a6" stroke-width="1.5"/>
<path d="M1143.1,861.5L1142,866.9" stroke="#a6a6a6" stroke-width="1.5"/>
<path d="M963.5,983.9C964.3,989.9 966.3,1005.0 968.1,1020.0C969.9,1035.0 973.0,1058.2 974.4,1073.8C975.8,1089.2 976.6,1100.6 976.6,1113.0C976.6,1125.4 974.8,1142.2 974.4,1148.0" stroke="#000" stroke-width="3.8" fill="none"/>
<path d="M1017.4,1003.3C1017.6,1006.1 1018.4,1009.0 1018.5,1020.0C1018.6,1031.0 1018.0,1049.5 1018.1,1069.4C1018.2,1089.3 1019.0,1126.6 1019.2,1139.4C1019.4,1152.2 1019.2,1144.9 1019.2,1146.0" stroke="#000" stroke-width="3.8" fill="none"/>
<path d="M1054.1,1003.9C1054.0,1006.6 1053.7,1009.1 1053.5,1020.0C1053.3,1030.9 1053.1,1049.5 1053.1,1069.4C1053.1,1089.3 1052.7,1125.6 1053.6,1139.4C1054.5,1153.2 1057.8,1150.3 1058.6,1152.5" stroke="#000" stroke-width="3.8" fill="none"/>
<path d="M1115.9,977.0C1114.8,984.2 1110.8,1008.2 1109.1,1020.0C1107.4,1031.8 1107.2,1035.6 1105.7,1047.5C1104.2,1059.4 1101.9,1076.7 1100.2,1091.3C1098.5,1105.9 1096.5,1127.7 1095.8,1135.0" stroke="#000" stroke-width="3.8" fill="none"/>
<path d="M983.1,1143.8C980.9,1144.8 979.1,1145.9 970.0,1150.3C960.9,1154.7 942.6,1164.5 928.4,1170.0C914.2,1175.5 897.3,1179.2 884.7,1183.0C872.1,1186.8 859.1,1190.3 853.0,1193.0C846.9,1195.7 849.2,1194.2 848.2,1199.0C847.2,1203.8 846.6,1216.6 847.3,1222.0C848.0,1227.4 849.4,1228.8 852.5,1231.5C855.6,1234.2 858.1,1236.0 866.0,1238.0C873.9,1240.0 892.5,1242.8 900.0,1243.5C907.5,1244.2 906.7,1244.2 911.0,1242.5C915.3,1240.8 918.4,1238.2 926.0,1233.0C933.6,1227.8 942.3,1223.5 956.9,1211.6C971.5,1199.6 1003.5,1171.2 1013.8,1161.3C1024.1,1151.4 1017.6,1154.5 1018.5,1152.0C1019.4,1149.5 1019.1,1147.0 1019.2,1146.0" stroke="#000" stroke-width="3.8" fill="none"/>
<path d="M865,1226.9L866.1,1235.6" stroke="#000" stroke-width="2.8"/>
<path d="M888,1230L887.3,1241" stroke="#000" stroke-width="2.8"/>
<path d="M873.8,1201.7C876.1,1202.6 882.3,1205.8 888.0,1207.0C893.7,1208.2 904.4,1208.7 907.7,1209.0" stroke="#a6a6a6" stroke-width="1.6" fill="none"/>
<path d="M1092.5,1137.2C1094.0,1137.9 1090.3,1136.5 1101.3,1141.6C1112.2,1146.7 1140.3,1160.9 1158.2,1167.8C1176.1,1174.7 1197.2,1178.2 1208.5,1183.0C1219.8,1187.8 1222.7,1191.2 1226.0,1196.3C1229.3,1201.4 1229.7,1209.0 1228.2,1213.8C1226.7,1218.5 1224.5,1222.0 1217.2,1224.7C1209.9,1227.4 1194.2,1229.5 1184.4,1230.2C1174.6,1230.9 1167.0,1230.7 1158.2,1229.0C1149.5,1227.3 1141.0,1225.8 1131.9,1220.3C1122.8,1214.8 1115.7,1207.6 1103.5,1196.3C1091.3,1185.0 1066.1,1159.8 1058.6,1152.5" stroke="#000" stroke-width="3.8" fill="none"/>
<path d="M1185.5,1218L1183.3,1229" stroke="#000" stroke-width="2.8"/>
<path d="M1215.5,1213.75L1213.3,1224.7" stroke="#000" stroke-width="2.8"/>
<path d="M1166.9,1198.5C1170.1,1198.0 1180.2,1197.0 1186.0,1195.5C1191.8,1194.0 1199.2,1190.7 1201.9,1189.7" stroke="#a6a6a6" stroke-width="1.6" fill="none"/>
<path d="M985.8,1069.4L995.8,1069.2" stroke="#a6a6a6" stroke-width="1.6"/>
<path d="M987,1076L991.9,1076.2" stroke="#a6a6a6" stroke-width="1.6"/>
<path d="M1080.5,1065.4L1090.8,1065.8" stroke="#a6a6a6" stroke-width="1.6"/>
<path d="M1081,1073.3L1087.7,1073.5" stroke="#a6a6a6" stroke-width="1.6"/>
<path d="M637.8,187.2L639.7,202.7" stroke="#000" stroke-width="3.6"/>
<path d="M646.7,189.5L647.7,201.7" stroke="#000" stroke-width="3.6"/>
<path d="M661.7,191.9L663.1,228" stroke="#000" stroke-width="3.6"/>
<path d="M661.7,192.5C663.5,192.4 669.5,191.2 672.5,191.9C675.5,192.6 679.1,194.4 680.0,196.6C680.9,198.8 680.8,201.9 678.1,205.0C675.4,208.1 662.4,212.7 664.0,215.3C665.6,217.9 683.6,219.6 687.5,220.5" stroke="#000" stroke-width="3.6" fill="none"/>
<path d="M687.5,221.9C689.2,217.6 694.5,195.6 697.8,196.1C701.1,196.6 705.6,219.9 707.2,224.7" stroke="#000" stroke-width="3.6" fill="none"/>
<path d="M684.7,211.1L708.1,213.4" stroke="#000" stroke-width="3.6"/>
<path d="M712.8,197.5L714.7,222.3" stroke="#000" stroke-width="3.6"/>
<path d="M712.8,197.0C714.5,196.6 720.1,194.6 723.1,194.7C726.1,194.8 731.9,195.8 730.6,197.5C729.4,199.2 715.3,203.4 715.6,205.0C715.9,206.6 728.3,205.2 732.5,206.9C736.7,208.6 740.6,212.2 740.9,215.3C741.2,218.4 737.4,223.4 734.4,225.6C731.4,227.8 725.6,228.7 723.1,228.4C720.6,228.1 718.6,225.8 719.4,223.8C720.2,221.7 724.0,218.4 727.8,216.2C731.5,214.1 739.5,211.5 741.9,210.6" stroke="#000" stroke-width="3.6" fill="none"/>
<path d="M760.6,197.5C759.0,197.5 754.2,196.6 751.2,197.5C748.3,198.4 742.8,201.4 742.8,203.1C742.8,204.8 748.0,205.9 751.2,207.8C754.5,209.7 761.1,211.9 762.5,214.4C763.9,216.9 762.5,221.9 759.7,222.8C756.9,223.7 748.0,220.5 745.6,220.0" stroke="#000" stroke-width="3.6" fill="none"/>
<path d="M773.75,190L774.7,198.9" stroke="#000" stroke-width="3.6"/>
<path d="M781.25,190.5L782.7,202.7" stroke="#000" stroke-width="3.6"/>
<path d="M635.5,249L637.3,279" stroke="#000" stroke-width="3.6"/>
<path d="M634.0,251.0C635.4,250.4 639.7,247.7 642.5,247.7C645.3,247.7 649.8,249.2 650.9,251.0C652.0,252.8 651.2,256.1 649.0,258.4C646.8,260.7 635.9,262.8 637.8,265.0C639.7,267.2 656.5,270.5 660.3,271.6" stroke="#000" stroke-width="3.6" fill="none"/>
<path d="M660.3,275.3C662.0,271.2 666.7,250.7 670.6,250.9C674.5,251.1 681.6,272.0 683.8,276.2" stroke="#000" stroke-width="3.6" fill="none"/>
<path d="M659.4,270.6L682.8,272.5" stroke="#000" stroke-width="3.6"/>
<path d="M691.7,255.5L694.5,277" stroke="#000" stroke-width="3.6"/>
<path d="M687.5,255.5C688.6,254.9 691.5,252.6 694.1,251.7C696.8,250.8 700.9,250.1 703.4,250.3C705.9,250.5 708.1,251.4 709.1,252.7C710.1,253.9 710.1,256.2 709.1,257.8C708.1,259.4 705.9,260.4 703.4,262.0C700.9,263.6 693.6,266.6 694.1,267.2C694.6,267.8 702.7,265.2 706.3,265.3C709.9,265.4 714.5,266.4 715.6,267.7C716.7,268.9 714.8,271.5 712.8,272.8C710.8,274.1 705.3,275.4 703.4,275.6C701.5,275.8 700.3,276.1 701.1,274.2C701.9,272.3 705.4,267.6 708.1,264.4C710.8,261.2 715.9,256.6 717.5,255.0" stroke="#000" stroke-width="3.6" fill="none"/>
<path d="M718.9,255.5L725.5,278.9" stroke="#000" stroke-width="3.6"/>
<path d="M717.5,255.0C719.1,254.4 724.2,252.1 726.9,251.3C729.6,250.5 732.1,249.9 733.9,250.3C735.7,250.7 737.7,252.3 737.7,253.6C737.7,254.8 735.9,256.1 733.9,257.8C731.9,259.5 725.1,263.4 725.5,263.9C725.9,264.4 732.5,261.0 736.3,260.6C740.0,260.2 746.0,260.7 748.0,261.6C750.0,262.6 749.2,264.4 748.4,266.3C747.6,268.2 745.1,271.4 743.3,272.8C741.5,274.2 738.7,274.9 737.7,274.7C736.7,274.5 735.9,273.9 737.2,271.9C738.5,269.9 742.6,265.5 745.6,262.5C748.6,259.5 752.8,254.9 755.0,254.1C757.2,253.3 757.6,254.4 758.8,257.8C760.0,261.2 761.5,271.9 762.0,274.7" stroke="#000" stroke-width="3.6" fill="none"/>
<path d="M766.25,253.75L790.6,247.7" stroke="#000" stroke-width="3.6"/>
<path d="M781.25,249L780.3,280.5" stroke="#000" stroke-width="3.6"/>
<path d="M692,315.5 Q705,313.5 720,314.5 Q727,315.5 727.5,323 L728,368 Q728,379 715,379 L697,378.5 Q688.5,378 688.5,370 L688,322 Q688,316 692,315.5Z" stroke="#000" stroke-width="1.7"/>
<path d="M694.3,336.6 L693.0,322.1" stroke="#000" stroke-width="1.6"/>
<path d="M693.0,322.1C693.9,322.3 697.2,322.2 698.2,323.2C699.2,324.2 699.8,326.7 699.3,328.2C698.8,329.7 695.6,331.5 694.9,332.1" stroke="#000" stroke-width="1.6" fill="none"/>
<path d="M694.9,332.1 L702.1,336.0" stroke="#000" stroke-width="1.6"/>
<path d="M709.3,324.3 L703.8,324.3 L704.3,337.1 L711.0,335.4" stroke="#000" stroke-width="1.6"/>
<path d="M704.3,331.2 L709.3,330.8" stroke="#000" stroke-width="1.6"/>
<path d="M715.4,338.8 L714.3,322.7 L721.0,337.1 L719.3,321.6" stroke="#000" stroke-width="1.6"/>
<path d="M693.8,352.7 L694.3,342.1 L700.4,349.9 L705.4,342.7 L707.7,354.9" stroke="#000" stroke-width="1.6"/>
<path d="M718.2,342.1 L711.0,343.2 L712.7,353.2 L719.3,351.6" stroke="#000" stroke-width="1.6"/>
<path d="M711.6,348.2 L717.1,347.1" stroke="#000" stroke-width="1.6"/>
<path d="M693.8,358.2 L692.9,372.1 L698.2,372.1" stroke="#000" stroke-width="1.6"/>
<path d="M706.3,358.8 L700.4,359.3 L701.0,374.9 L706.6,373.8" stroke="#000" stroke-width="1.6"/>
<path d="M701.0,366.6 L706.6,366.0" stroke="#000" stroke-width="1.6"/>
<ellipse cx="712.1" cy="366" rx="2.9" ry="6.2" stroke="#000" stroke-width="1.6"/>
<path d="M717.7,373.2 L717.1,358.8 L724.9,371.6 L723.8,357.7" stroke="#000" stroke-width="1.6"/>
</svg>
<div id="topbar"></div>
<div id="gallery">Gallery</div>
<svg class="abs" style="left:0;top:0" width="1920" height="1440" viewBox="0 0 1920 1440">
<defs>
<mask id="wrm" maskUnits="userSpaceOnUse" x="150" y="0" width="80" height="76">
<rect x="150" y="0" width="80" height="76" fill="#fff"/>
<rect x="-3" y="-18" width="6" height="14" rx="1.5" fill="#000" transform="translate(201,31) rotate(45)"/>
</mask>
</defs>
<g fill="#141414">
<circle cx="193.3" cy="37.6" r="27.9"/>
<circle cx="293.3" cy="37.6" r="27.9"/>
<circle cx="393.3" cy="37.6" r="27.9"/>
<circle cx="493.3" cy="37.6" r="27.9"/>
</g>
<!-- wrench -->
<path d="M199.7,23.1 C194.5,23.4 190.3,27 189.9,32 C189.7,34 190.4,35.8 191.6,37 L179.6,49 A2.25,2.25 0 0 0 182.8,52.2 L194.6,40.3 C196.4,41.4 198.4,41.9 200.6,41.7 C205,41.3 208.3,37.4 208.1,32.1 L203.6,35.6 C203,36 202.3,35.9 201.8,35.4 L196.4,29.9 C195.9,29.3 195.9,28.6 196.3,28.1 Z" fill="#a0a0a0" stroke="#0c0c0c" stroke-width="1.2" paint-order="stroke"/>
<!-- magic wand -->
<g fill="#a0a0a0">
<line x1="286" y1="50.6" x2="304.6" y2="32.2" stroke="#a0a0a0" stroke-width="5.8" stroke-linecap="round"/>
<line x1="295.7" y1="36" x2="301.3" y2="41.6" stroke="#0c0c0c" stroke-width="1.3"/>
<path d="M287.8,23.8 Q288.1,30.9 295.2,31.2 Q288.1,31.5 287.8,38.6 Q287.5,31.5 280.4,31.2 Q287.5,30.9 287.8,23.8Z"/>
<path d="M297.5,22.9 Q297.9,26 301,26.4 Q297.9,26.8 297.5,29.9 Q297.1,26.8 294,26.4 Q297.1,26 297.5,22.9Z"/>
</g>
<!-- selection S -->
<g fill="#a0a0a0" stroke="#0a0a0a" stroke-width="1.2" paint-order="stroke">
<path d="M389.3,29.4 Q392,24.4 398,24.2 L404.8,24.2 Q407.4,24.2 407.4,26.8 Q407.4,29.4 404.8,29.4Z"/>
<path d="M397.7,46.7 Q395,51.5 389,51.6 L382.8,51.6 Q380.2,51.6 380.2,49.1 Q380.2,46.7 382.8,46.7Z"/>
<path d="M388.2,32.1 L393.6,32.1 C394,34.5 394.8,36 396.2,37.6 C397.6,39.4 397.9,41.5 397.9,43.8 L392.5,43.8 C392.5,42 392.2,40.6 391,39.2 C389.4,37.4 388.4,35.4 388.2,32.1Z"/>
</g>
<!-- transform arrow -->
<g fill="#a0a0a0" stroke="#0a0a0a" stroke-width="1.2" paint-order="stroke" stroke-linejoin="round">
<path d="M507.4,24.2 L483,35.8 L491.2,36.6 L482.2,46.8 Q480.4,49 482.4,50.6 Q484.2,52 486,50.2 L494.8,40.2 L495.6,48.6Z"/>
</g>
<!-- brush -->
<g fill="#0a7aff" stroke="#120a00" stroke-width="1.4" paint-order="stroke" stroke-linejoin="round">
<path d="M1388.4,43.8 C1392,39.6 1398,33.6 1403.2,29.1 C1407,25.6 1411,21.8 1414,19.4 C1416,17.8 1418,16.4 1419.6,16.1 C1419.4,17.6 1418.6,19.2 1418.2,20.2 C1416.6,23 1414.6,25.4 1412.4,27.8 C1409,31.4 1405,35.2 1401.3,38.3 C1397.6,41.2 1394,43.8 1390.6,45.9 C1389.6,46 1388.4,45 1388.4,43.8Z"/>
<path d="M1387.9,46.4 C1389.2,47.6 1389.2,50.4 1388.2,52.4 C1386.8,55.4 1384,58 1380.4,59 C1377,59.9 1373.4,59.9 1371,58.6 C1370.4,58.2 1370.6,57.6 1371.2,57.4 C1373.6,56.4 1375.4,54.6 1376.4,52.2 C1377.6,49.4 1379.6,47.4 1382.2,46.4 C1384.2,45.6 1386.6,45.6 1387.9,46.4Z"/>
</g>
<!-- smudge -->
<g fill="#c8c8c8" stroke="#0c0c0c" stroke-width="1.4" paint-order="stroke">
<path d="M1526.6,15.6 L1536.6,25.4 L1531.8,30.6 Q1532.2,35 1532.2,39.4 Q1531,46 1526.8,48.8 L1520.6,52.9 Q1517.4,53.4 1515.4,51.2 L1524.6,41.4 Q1525.6,40.2 1524.2,39.2 Q1523.4,38.8 1522.6,39.6 L1503.6,59.8 Q1500,60.6 1497.4,59.8 Q1494.4,57.8 1495.8,53.6 L1503.3,43 Q1501.6,38.8 1500.6,35 Q1499.8,31.6 1502,28.8 L1507.4,22.4 Q1509,21 1511,21 L1521.4,20.8Z"/>
</g>
<!-- eraser -->
<g fill="#c8c8c8" stroke="#0c0c0c" stroke-width="1.4" paint-order="stroke">
<path d="M1641.5,20.2 Q1646,16.4 1651.2,20.8 L1660.5,29.2 L1636.4,52.6 L1622,38.6Z"/>
<path d="M1620.6,40.2 L1634.8,54.2 L1633.5,55.4 Q1628,59.6 1622.4,54.4 L1613.4,46.4Z"/>
</g>
<!-- layers -->
<g fill="#c8c8c8" stroke="#0c0c0c" stroke-width="1.4" paint-order="stroke">
<path d="M1751.5,17 L1774.4,17 Q1778.4,17 1778.4,21 L1778.4,44.1 Q1778.4,48.1 1774.4,48.1 L1769.9,48.1 L1769.9,30 Q1769.9,25.3 1765.2,25.3 L1747.5,25.3 L1747.5,21 Q1747.5,17 1751.5,17Z"/>
<rect x="1736.9" y="27.3" width="31.2" height="31.6" rx="4.2"/>
</g>
<!-- color -->
<circle cx="1878.6" cy="38" r="25.7" fill="#000" stroke="#9a9a9a" stroke-width="2"/>

<!-- sidebar -->
<rect x="-12" y="428" width="84.2" height="895.6" rx="10" fill="#1a1a1a"/>
<rect x="6" y="433.8" width="60.3" height="295" rx="6" fill="#252525"/>
<rect x="6" y="871" width="60.3" height="293.3" rx="6" fill="#252525"/>
<g fill="#6a6a6a">
<rect x="19" y="553.3" width="35" height="6.8" rx="3.4"/>
<rect x="19" y="587.2" width="35" height="6.8" rx="3.4"/>
<rect x="19" y="663.3" width="35" height="6.8" rx="3.4"/>
<rect x="19" y="988" width="35" height="7.2" rx="3.6"/>
</g>
<rect x="7" y="614.4" width="58.8" height="29.6" rx="7" fill="#aaaaaa"/>
<rect x="19" y="625.8" width="35" height="7" rx="3.5" fill="#0a7aff"/>
<rect x="22" y="783.5" width="29" height="29.2" rx="6" fill="none" stroke="#a0a0a0" stroke-width="3.4"/>
<rect x="7" y="871" width="58.3" height="29.4" rx="6.5" fill="#aaaaaa"/>
<!-- undo -->
<g fill="none" stroke="#a8a8a8" stroke-width="3.7" stroke-linecap="round">
<path d="M31,1201 L42.6,1201 A7.9,7.9 0 0 1 42.6,1216.8 L25,1216.8"/>
</g>
<path d="M21.5,1200.8 L32.6,1193.8 L32.6,1208Z" fill="#a8a8a8"/>
<g fill="none" stroke="#3a3a3a" stroke-width="3.7" stroke-linecap="round">
<path d="M41,1273.8 L30.6,1273.8 A7.9,7.9 0 0 0 30.6,1289.6 L47.8,1289.6"/>
</g>
<path d="M51.1,1273.6 L40.3,1266.6 L40.3,1280.4Z" fill="#3a3a3a"/>
</svg>

</body></html>
